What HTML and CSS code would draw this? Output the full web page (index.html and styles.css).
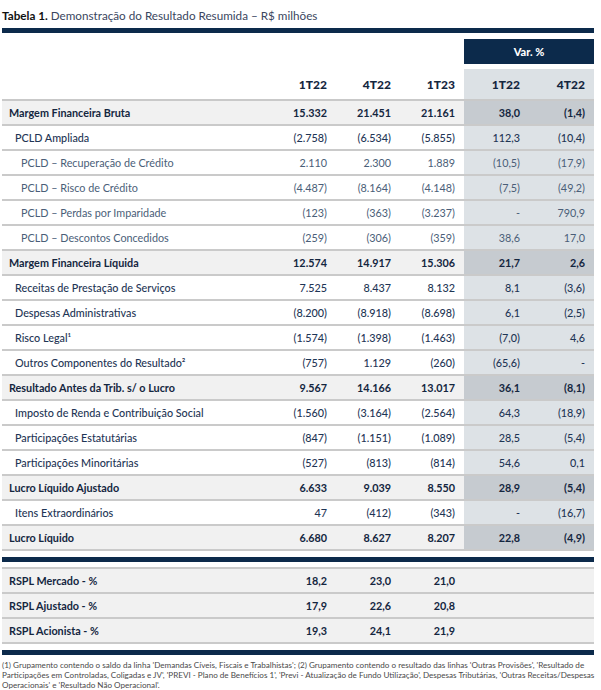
FILE: index.html
```html
<!DOCTYPE html>
<html lang="pt-BR">
<head>
<meta charset="utf-8">
<link rel="stylesheet" href="styles.css">
</head>
<body>
<div class="page">
  <div class="title"><b>Tabela 1.</b> Demonstração do Resultado Resumida – R$ milhões</div>
  <div class="bar"></div>
  <div class="varhead"><div class="varbox">Var. %</div></div>
  <table class="tbl">
    <colgroup><col class="c-label"><col class="c-num"><col class="c-num"><col class="c-num"><col class="c-var"><col class="c-var"></colgroup>
    <thead>
      <tr class="hdr"><th></th><th>1T22</th><th>4T22</th><th>1T23</th><th class="v">1T22</th><th class="v">4T22</th></tr>
    </thead>
    <tbody>
      <tr class="b"><td>Margem Financeira Bruta</td><td>15.332</td><td>21.451</td><td>21.161</td><td class="v">38,0</td><td class="v">(1,4)</td></tr>
      <tr class="l1"><td>PCLD Ampliada</td><td>(2.758)</td><td>(6.534)</td><td>(5.855)</td><td class="v">112,3</td><td class="v">(10,4)</td></tr>
      <tr class="l2"><td>PCLD – Recuperação de Crédito</td><td>2.110</td><td>2.300</td><td>1.889</td><td class="v">(10,5)</td><td class="v">(17,9)</td></tr>
      <tr class="l2"><td>PCLD – Risco de Crédito</td><td>(4.487)</td><td>(8.164)</td><td>(4.148)</td><td class="v">(7,5)</td><td class="v">(49,2)</td></tr>
      <tr class="l2"><td>PCLD – Perdas por Imparidade</td><td>(123)</td><td>(363)</td><td>(3.237)</td><td class="v">-</td><td class="v">790,9</td></tr>
      <tr class="l2"><td>PCLD – Descontos Concedidos</td><td>(259)</td><td>(306)</td><td>(359)</td><td class="v">38,6</td><td class="v">17,0</td></tr>
      <tr class="b"><td>Margem Financeira Líquida</td><td>12.574</td><td>14.917</td><td>15.306</td><td class="v">21,7</td><td class="v">2,6</td></tr>
      <tr class="l1"><td>Receitas de Prestação de Serviços</td><td>7.525</td><td>8.437</td><td>8.132</td><td class="v">8,1</td><td class="v">(3,6)</td></tr>
      <tr class="l1"><td>Despesas Administrativas</td><td>(8.200)</td><td>(8.918)</td><td>(8.698)</td><td class="v">6,1</td><td class="v">(2,5)</td></tr>
      <tr class="l1"><td>Risco Legal¹</td><td>(1.574)</td><td>(1.398)</td><td>(1.463)</td><td class="v">(7,0)</td><td class="v">4,6</td></tr>
      <tr class="l1"><td>Outros Componentes do Resultado²</td><td>(757)</td><td>1.129</td><td>(260)</td><td class="v">(65,6)</td><td class="v">-</td></tr>
      <tr class="b"><td>Resultado Antes da Trib. s/ o Lucro</td><td>9.567</td><td>14.166</td><td>13.017</td><td class="v">36,1</td><td class="v">(8,1)</td></tr>
      <tr class="l1"><td>Imposto de Renda e Contribuição Social</td><td>(1.560)</td><td>(3.164)</td><td>(2.564)</td><td class="v">64,3</td><td class="v">(18,9)</td></tr>
      <tr class="l1"><td>Participações Estatutárias</td><td>(847)</td><td>(1.151)</td><td>(1.089)</td><td class="v">28,5</td><td class="v">(5,4)</td></tr>
      <tr class="l1"><td>Participações Minoritárias</td><td>(527)</td><td>(813)</td><td>(814)</td><td class="v">54,6</td><td class="v">0,1</td></tr>
      <tr class="b"><td>Lucro Líquido Ajustado</td><td>6.633</td><td>9.039</td><td>8.550</td><td class="v">28,9</td><td class="v">(5,4)</td></tr>
      <tr class="l1"><td>Itens Extraordinários</td><td>47</td><td>(412)</td><td>(343)</td><td class="v">-</td><td class="v">(16,7)</td></tr>
      <tr class="b"><td>Lucro Líquido</td><td>6.680</td><td>8.627</td><td>8.207</td><td class="v">22,8</td><td class="v">(4,9)</td></tr>
    </tbody>
  </table>
  <div class="bar bar-mid"></div>
  <table class="tbl rspl">
    <colgroup><col class="c-label"><col class="c-num"><col class="c-num"><col class="c-num"><col class="c-var"><col class="c-var"></colgroup>
    <tbody>
      <tr class="b"><td>RSPL Mercado - %</td><td>18,2</td><td>23,0</td><td>21,0</td><td></td><td></td></tr>
      <tr class="b"><td>RSPL Ajustado - %</td><td>17,9</td><td>22,6</td><td>20,8</td><td></td><td></td></tr>
      <tr class="b"><td>RSPL Acionista - %</td><td>19,3</td><td>24,1</td><td>21,9</td><td></td><td></td></tr>
    </tbody>
  </table>
  <div class="bar bar-bot"></div>
  <p class="note">(1) Grupamento contendo o saldo da linha 'Demandas Cíveis, Fiscais e Trabalhistas'; (2) Grupamento contendo o resultado das linhas 'Outras Provisões', 'Resultado de<br>Participações em Controladas, Coligadas e JV', 'PREVI - Plano de Benefícios 1', 'Previ - Atualização de Fundo Utilização', Despesas Tributárias, 'Outras Receitas/Despesas<br>Operacionais' e 'Resultado Não Operacional'.</p>
</div>
</body>
</html>
```

FILE: styles.css
```css
* { box-sizing: border-box; }
html, body { margin: 0; padding: 0; background: #fff; }
body { font-family: Lato, "Open Sans", sans-serif; color: #1b2d4a; }
.page { width: 601px; padding: 7px 7px 0 2px; }

.title { font-size: 11.7px; color: #3a4660; line-height: 16px; height: 17px; }
.title b { color: #111; font-weight: 700; }

.bar { height: 5px; background: #0c2a4b; margin-top: 4px; }
.bar-mid { margin-top: 6px; margin-bottom: 5px; }
.bar-bot { margin-top: 6px; }

.varhead { display: flex; justify-content: flex-end; margin-top: 6px; }
.varbox { width: 130px; height: 25px; background: #0c2a4b; color: #fff; font-weight: 900; font-size: 11px; display: flex; align-items: center; justify-content: center; }

.tbl { width: 592px; border-collapse: collapse; table-layout: fixed; font-size: 10.8px; }
.c-label { width: 270px; }
.c-num { width: 64px; }
.c-var { width: 65px; }

.tbl th, .tbl td { padding: 0 9px 0 0; text-align: right; white-space: nowrap; }
.tbl th:first-child, .tbl td:first-child { text-align: left; padding: 0 0 0 7px; }

.hdr { height: 36px; }
.hdr th { font-weight: 900; font-size: 12px; color: #14263f; border-bottom: 2px solid #c9c9c9; padding-top: 5px; }
.hdr th.v { background: linear-gradient(#fff 0 5px, #dce1e5 5px); }

.tbl tbody tr { height: 25px; }
.tbl tbody td { border-bottom: 2px solid #cacaca; }
.tbl tbody td.v { background: #dde2e6; }

tr.b td { background: #f1f1f1; font-weight: 700; color: #14263f; }
tr.b td.v { background: #c6cbd0; }
tr.l1 td { font-weight: 500; color: #1e3555; }
tr.l1 td:first-child { padding-left: 13px; }
tr.l2 td { font-weight: 400; color: #4a5e78; }
tr.l2 td:first-child { padding-left: 19px; }

.rspl { border-top: 2px solid #cacaca; }
.rspl tr.b td, .rspl tr.b td.v { background: #f1f1f1; }

.note { margin: 5px 0 0 0; font-size: 8.1px; line-height: 10px; color: #4a4a4a; white-space: nowrap; }
```
